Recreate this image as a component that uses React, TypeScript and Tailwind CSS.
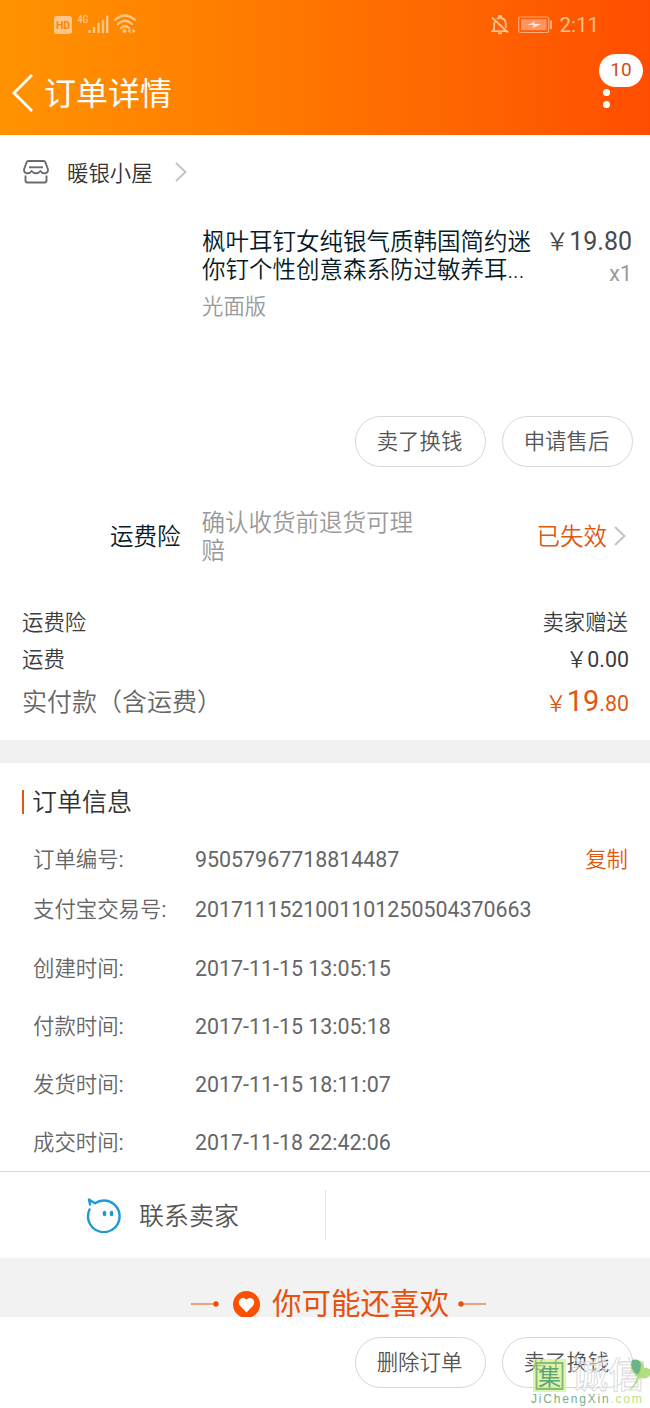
import type { ReactNode } from 'react';

const orderInfo = [
  { label: '订单编号', value: '95057967718814487', height: 'h-[49px]', copy: true },
  { label: '支付宝交易号', value: '2017111521001101250504370663', height: 'h-[50px] mb-[5px]' },
  { label: '创建时间', value: '2017-11-15 13:05:15', height: 'h-[58px]' },
  { label: '付款时间', value: '2017-11-15 13:05:18', height: 'h-[58px]' },
  { label: '发货时间', value: '2017-11-15 18:11:07', height: 'h-[58px]' },
  { label: '成交时间', value: '2017-11-18 22:42:06', height: 'h-[58px]' },
];

const Chevron = ({ className }: { className: string }) => (
  <svg className={className} viewBox="0 0 12 20" fill="none" stroke="#c4c4c4" strokeWidth="2">
    <path d="M1 1l9.5 9L1 19" />
  </svg>
);

const PillButton = ({ children }: { children: ReactNode }) => (
  <button
    type="button"
    className="flex h-[51px] w-[131px] items-center justify-center rounded-full border border-[#d6d6d6] pt-[2px] pr-[2px] text-[21.4px] font-[350] text-[#555]"
  >
    {children}
  </button>
);

const StatusBar = () => (
  <div className="flex h-[50px] items-center pl-[53px] pr-[51px] text-[#ffc08c]">
    <svg className="h-[26px] w-[90px]" viewBox="0 0 90 26">
      <rect x="1" y="4" width="18" height="18" rx="3" fill="#ffc68a" />
      <text x="10" y="17" textAnchor="middle" fontFamily="Roboto, sans-serif" fontSize="10.5" fontWeight="700" fill="#ff8500">HD</text>
      <text x="24.5" y="11" fontFamily="Roboto, sans-serif" fontSize="11" fontWeight="500" textLength="11" lengthAdjust="spacingAndGlyphs" fill="#ffc68a">4G</text>
      <g stroke="#ffc68a" strokeWidth="2.4">
        <path d="M36.5 21v-3M41 21v-6M45.5 21v-10M50 21V8M54.2 21V3.500" />
      </g>
      <g fill="none" stroke="#ffc68a" strokeWidth="2.2" strokeLinecap="round">
        <path d="M62 8q10-9 20 0M65 12q7-6.500 14 0M68 16q4-3.500 8 0" />
      </g>
      <circle cx="71.500" cy="19" r="2" fill="#ffc68a" />
      <path d="M74.500 19l3-2.500v5zM82.500 19l-3-2.500v5z" fill="#ffc68a" />
    </svg>
    <div className="ml-auto flex items-center">
      <svg className="h-5 w-[18px]" viewBox="0 0 18 20" fill="none" stroke="currentColor" strokeWidth="1.800">
        <path d="M1 2.500l16 15M4.300 6q-1.100 1.500-1.100 4v4l-2 2.200h13.600M6 4q1-.8 2-1V1h2v2q4.800 1 4.800 6v4" />
        <path d="M7 18.200h4" strokeWidth="2" />
      </svg>
      <svg className="ml-[9px] h-[18px] w-[35px]" viewBox="0 0 35 18">
        <rect x=".7" y="1" width="30" height="15.500" rx="2" fill="none" stroke="#ffa978" strokeWidth="1.200" />
        <rect x="3" y="3.200" width="25.500" height="11" fill="#ff9560" />
        <path d="M9 9l8-3.500-.5 2.500H23l-8 4 .5-3z" fill="#ffe3d1" />
        <path d="M33 4.500v8.500" stroke="#ffa978" strokeWidth="2" />
      </svg>
      <span className="ml-[6px] text-[20.5px] leading-6">2:11</span>
    </div>
  </div>
);

const Header = () => (
  <header className="h-[135px] bg-gradient-to-r from-[#ff9300] to-[#ff4d00]">
    <StatusBar />
    <div className="flex h-[85px] items-center pl-[11px] pr-[39px] text-white">
      <svg className="h-[40px] w-[23px]" viewBox="0 0 23 40" fill="none" stroke="currentColor" strokeWidth="2.800">
        <path d="M21 2L3 20l18 18" />
      </svg>
      <h1 className="ml-[10px] pt-[2px] text-[32px] leading-[40px]">订单详情</h1>
      <div className="relative ml-auto flex h-[30px] w-2 flex-col justify-end gap-[5px]">
        <span className="absolute -left-[4px] -top-[24px] flex h-[33px] w-[44px] items-center justify-center rounded-full bg-white text-[19px] text-[#c9501d]">
          10
        </span>
        <span className="h-[7px] w-[7px] rounded-full bg-white" />
        <span className="h-[7px] w-[7px] rounded-full bg-white" />
      </div>
    </div>
  </header>
);

const ShopIcon = () => (
  <svg className="-mt-px h-[24px] w-[26px]" viewBox="0 0 26 24" fill="none" stroke="#6b6c70" strokeWidth="1.900" strokeLinejoin="round">
    <path d="M5.500 1h15q1.500 0 2 1.500l2.500 7q0 3.800-3.600 3.800-2.400 0-4-2.300-1.700 2.300-4.400 2.300T8.600 11q-1.600 2.300-4 2.300Q1 13.300 1 9.500l2.500-7q.5-1.500 2-1.500z" />
    <path d="M6 7.300h14" />
    <path d="M2.500 15.500v5q0 2 2 2h17q2 0 2-2v-5" />
  </svg>
);

const Watermark = () => (
  <div className="pointer-events-none absolute left-[528px] top-[40px] w-[122px]">
    <svg className="h-[51px] w-[122px]" viewBox="0 0 122 51">
      <rect x="5" y="2" width="33" height="33" fill="#d3ee7c" fillOpacity=".65" />
      <rect x="8.500" y="6" width="26" height="26" fill="none" stroke="#79b878" strokeWidth="1.800" />
      <text x="21.500" y="28" textAnchor="middle" fontFamily="Noto Sans CJK SC, sans-serif" fontSize="23" fill="#5da478">集</text>
      <text x="43" y="31" fontFamily="Noto Sans CJK SC, sans-serif" fontSize="37" fontWeight="500" fill="#fff" fillOpacity=".5" stroke="#d4d4d4" strokeWidth=".8">诚信</text>
      <path d="M100 34q7-6 9-14-8-7-6-14 3-5 9-2 4 2 4 7 7-1 7 5-2 7-12 5-3 9-11 13z" fill="#a9dc70" fillOpacity=".9" />
      <path d="M104 3q8-2 9 5 0 5-3 10-9-6-6-15z" fill="#6ab487" />
    </svg>
    <p className="-mt-[17px] pl-[3px] font-['Liberation_Sans',sans-serif] text-[12px] leading-[16px] tracking-[1.8px] whitespace-nowrap text-[#79b087]">
      JiChengXin<span className="text-[#b9df85]">.com</span>
    </p>
  </div>
);

const App = () => {
  return (
    <div className="h-[1408px] w-[650px] overflow-hidden bg-white font-['Roboto','Noto_Sans_CJK_SC',sans-serif]">
      <Header />

      <div className="flex h-[93px] items-start pl-[23px] pt-[26px]">
        <ShopIcon />
        <span className="ml-[18px] text-[21.4px] leading-[26px] font-[350] text-[#333]">暖银小屋</span>
        <Chevron className="ml-[21px] mt-px h-[20px] w-[14px]" />
      </div>

      <div className="flex h-[188px] pl-[202px] pr-[18px]">
        <div className="w-[332px]">
          <p className="text-[23.5px] leading-[28px] font-[350] whitespace-nowrap text-[#051b28]">
            枫叶耳钉女纯银气质韩国简约迷
            <br />
            你钉个性创意森系防过敏养耳...
          </p>
          <p className="mt-[10px] text-[21.4px] leading-[26px] font-[350] text-[#999]">光面版</p>
        </div>
        <div className="ml-auto text-right whitespace-nowrap">
          <p className="text-[25px] leading-[28px] text-[#4a4a4a]">
            <span className="text-[24px] font-[350]">￥</span>19.80
          </p>
          <p className="mt-[4px] text-[21.4px] leading-[28px] text-[#999]">x1</p>
        </div>
      </div>

      <div className="flex justify-end gap-[16px] pr-[17px]">
        <PillButton>卖了换钱</PillButton>
        <PillButton>申请售后</PillButton>
      </div>

      <div className="mt-[42px] flex h-[56px] items-center pl-[110px] pr-[23px] text-[23.5px] leading-[28px] font-[350]">
        <span className="text-[#051b28]">运费险</span>
        <p className="ml-[21px] w-[212px] text-[#999]">确认收货前退货可理赔</p>
        <span className="ml-auto text-[#e0580f]">已失效</span>
        <Chevron className="-mt-[3px] ml-[6px] h-[20px] w-[14px]" />
      </div>

      <div className="flex h-[175px] flex-col pl-[22px] pr-[21px] pt-[40px] text-[21.4px] text-[#3c3c3c]">
        <div className="flex h-[37px] items-center justify-between font-[350]">
          <span>运费险</span>
          <span className="pr-px">卖家赠送</span>
        </div>
        <div className="flex h-[37px] items-center justify-between">
          <span className="font-[350]">运费</span>
          <span>
            <span className="font-[350]">￥</span>0.00
          </span>
        </div>
        <div className="flex h-[46px] items-center justify-between">
          <span className="text-[25px] font-[350] text-[#666]">
            实付款
            <span className="font-['Noto_Sans_CJK_TC',sans-serif]">（</span>
            含运费
            <span className="font-['Noto_Sans_CJK_TC',sans-serif]">）</span>
          </span>
          <span className="text-[#e0580f]">
            <span className="font-[350]">￥</span>
            <span className="text-[29px]">19</span>.80
          </span>
        </div>
      </div>

      <div className="h-[23px] bg-[#f1f1f1]" />

      <div className="h-[408px] pl-[22px] pr-[22px]">
        <div className="flex h-[73px] items-center pt-[7px]">
          <span className="-mt-[2px] h-[24px] w-[2px] bg-[#e0580f]" />
          <h2 className="ml-[8px] text-[25px] leading-[30px] font-[350] text-[#333]">订单信息</h2>
        </div>
        {orderInfo.map((row) => (
          <div key={row.label} className={`flex items-center pl-[11px] text-[21.4px] text-[#666] ${row.height}`}>
            <span className="w-[162px]">
              <span className="font-[350]">{row.label}</span>:
            </span>
            <span>{row.value}</span>
            {row.copy && <span className="ml-auto font-[350] text-[#e0580f]">复制</span>}
          </div>
        ))}
      </div>

      <div className="flex h-[87px] items-center border-t border-[#d8d8d8]">
        <div className="flex h-[50px] w-[326px] items-center border-r border-[#e4e4e4] pl-[86px]">
          <svg className="h-[36px] w-[36px]" viewBox="0 0 36 36" fill="none" stroke="#1f9ad6" strokeWidth="2.400" strokeLinejoin="round">
            <path d="M4 11.500Q2 15 2 19a15.800 15.800 0 1 0 15.800-15.500q-4.500 0-9 2.800L3 2.500l1.300 6" />
            <path d="M18.500 15.500v2M25.500 15.500v2" strokeWidth="3.500" strokeLinecap="round" />
          </svg>
          <span className="ml-[17px] pt-[3px] text-[25px] font-[350] text-[#555]">联系卖家</span>
        </div>
      </div>

      <div className="flex h-[59px] items-start overflow-hidden bg-[#f2f2f2] pt-[27px]">
        <div className="flex h-[38px] w-full items-center pl-[191px]">
          <svg className="h-[8px] w-[28px]" viewBox="0 0 28 8">
            <path d="M0 4h25" stroke="#e8510a" />
            <circle cx="25" cy="4" r="2.700" fill="#e8510a" />
          </svg>
          <svg className="ml-[14px] h-[27px] w-[27px]" viewBox="0 0 27 27">
            <circle cx="13.500" cy="13.500" r="13.500" fill="#fa5000" />
            <path d="M13.500 21.500L7 14.800C3 9.500 9.500 4 13.500 8.700c4-4.700 10.500.8 6.500 6.100z" fill="#fff" />
          </svg>
          <span className="ml-[12px] text-[29.500px] leading-[38px] whitespace-nowrap text-[#e8510a]">你可能还喜欢</span>
          <svg className="ml-[9px] h-[8px] w-[28px]" viewBox="0 0 28 8">
            <path d="M3 4h25" stroke="#e8510a" />
            <circle cx="3" cy="4" r="2.700" fill="#e8510a" />
          </svg>
        </div>
      </div>

      <div className="relative flex h-[91px] justify-end gap-[16px] bg-white pr-[17px] pt-[20px]">
        <PillButton>删除订单</PillButton>
        <PillButton>卖了换钱</PillButton>
        <Watermark />
      </div>
    </div>
  );
};

export default App;
